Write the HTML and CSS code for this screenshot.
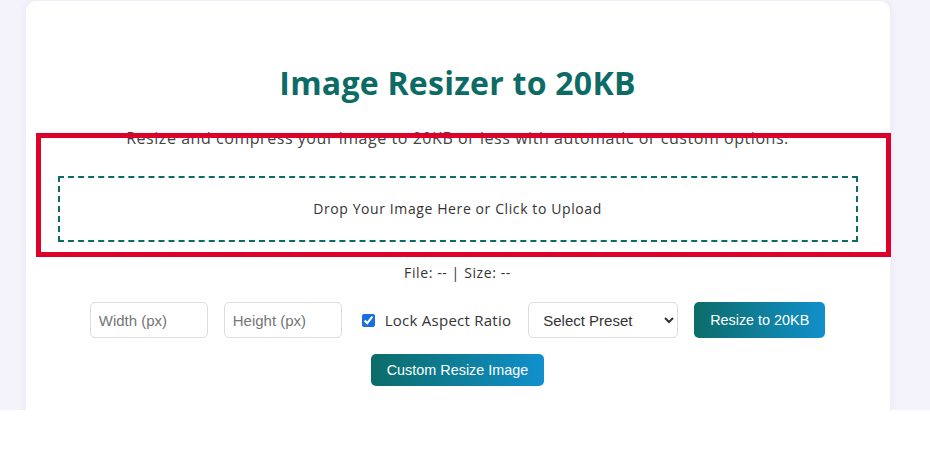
FILE: index.html
```html
<!DOCTYPE html>
<html lang="en">
<head>
<meta charset="utf-8">
<title>Image Resizer to 20KB</title>
<link rel="stylesheet" href="styles.css">
</head>
<body>
<div class="page">
  <main class="card">
    <h1 class="title">Image Resizer to 20KB</h1>
    <p class="lead">Resize and compress your image to 20KB or less with automatic or custom options.</p>
    <div class="drop">Drop Your Image Here or Click to Upload</div>
    <p class="info">File: -- | Size: --</p>
    <div class="controls">
      <input class="field" type="number" placeholder="Width (px)">
      <input class="field" type="number" placeholder="Height (px)">
      <label class="lock"><input class="check" type="checkbox" checked> Lock Aspect Ratio</label>
      <select class="preset">
        <option>Select Preset</option>
        <option>Passport Photo</option>
        <option>Signature</option>
      </select>
      <button class="btn btn-tall">Resize to 20KB</button>
    </div>
    <button class="btn btn-short">Custom Resize Image</button>
  </main>
  <div class="highlight"></div>
</div>
</body>
</html>
```

FILE: styles.css
```css
html, body {
  margin: 0;
  padding: 0;
  background: #ffffff;
}

.page {
  position: relative;
  box-sizing: border-box;
  width: 100%;
  height: 410px;
  padding-right: 15px;
  overflow: hidden;
  background: #f4f2fb;
  font-family: "Open Sans", "DejaVu Sans", sans-serif;
}

.card {
  box-sizing: border-box;
  width: 864px;
  min-height: 520px;
  margin: 1px auto 0;
  padding: 63px 32px 40px;
  background: #ffffff;
  border-radius: 10px;
  box-shadow: 0 0 8px rgba(60, 50, 120, 0.06);
  text-align: center;
  display: flex;
  flex-direction: column;
  align-items: center;
}

.title {
  margin: 0;
  font-size: 32px;
  line-height: 38px;
  font-weight: 700;
  letter-spacing: 0.25px;
  color: #0d6b66;
}

.lead {
  margin: 24px 0 0;
  font-size: 16px;
  line-height: 24px;
  letter-spacing: 0.55px;
  color: #444444;
}

.drop {
  box-sizing: border-box;
  align-self: stretch;
  margin-top: 26px;
  height: 66px;
  padding-bottom: 1px;
  border: 2px dashed #0d6b66;
  display: flex;
  align-items: center;
  justify-content: center;
  font-size: 14px;
  letter-spacing: 0.6px;
  color: #333333;
}

.info {
  margin: 21px 0 0;
  font-size: 14px;
  line-height: 20px;
  letter-spacing: 0.6px;
  color: #333333;
}

.controls {
  margin-top: 19px;
  display: flex;
  align-items: center;
  justify-content: center;
  gap: 16px;
}

.field {
  box-sizing: border-box;
  width: 118px;
  height: 36px;
  padding: 0 8px;
  border: 1px solid #dddddd;
  border-radius: 5px;
  font-family: "Liberation Sans", Arial, sans-serif;
  font-size: 15px;
  color: #333333;
  background: #ffffff;
}

.field::placeholder {
  color: #757575;
}

.lock {
  display: flex;
  align-items: center;
  font-size: 15px;
  letter-spacing: 0.25px;
  color: #333333;
  margin-left: 4px;
  margin-right: 1px;
}

.check {
  width: 13px;
  height: 13px;
  margin: 0 10px 0 0;
  accent-color: #1a6fe0;
}

.preset {
  box-sizing: border-box;
  width: 150px;
  height: 36px;
  padding: 0 8px 0 10px;
  border: 1px solid #dddddd;
  border-radius: 5px;
  background: #ffffff;
  font-family: "Liberation Sans", Arial, sans-serif;
  font-size: 15px;
  color: #333333;
}

.btn {
  border: none;
  border-radius: 5px;
  padding: 0;
  color: #ffffff;
  font-family: "Liberation Sans", Arial, sans-serif;
  font-size: 14.4px;
  background: linear-gradient(90deg, #0c6c68 0%, #1190cc 100%);
  cursor: pointer;
}

.btn-tall {
  width: 131px;
  height: 36px;
}

.btn-short {
  width: 173px;
  margin-top: 16px;
  height: 32px;
}

.highlight {
  position: absolute;
  left: 36px;
  top: 133px;
  width: 855px;
  height: 124px;
  box-sizing: border-box;
  border: 5px solid #dd0029;
  pointer-events: none;
}
```
